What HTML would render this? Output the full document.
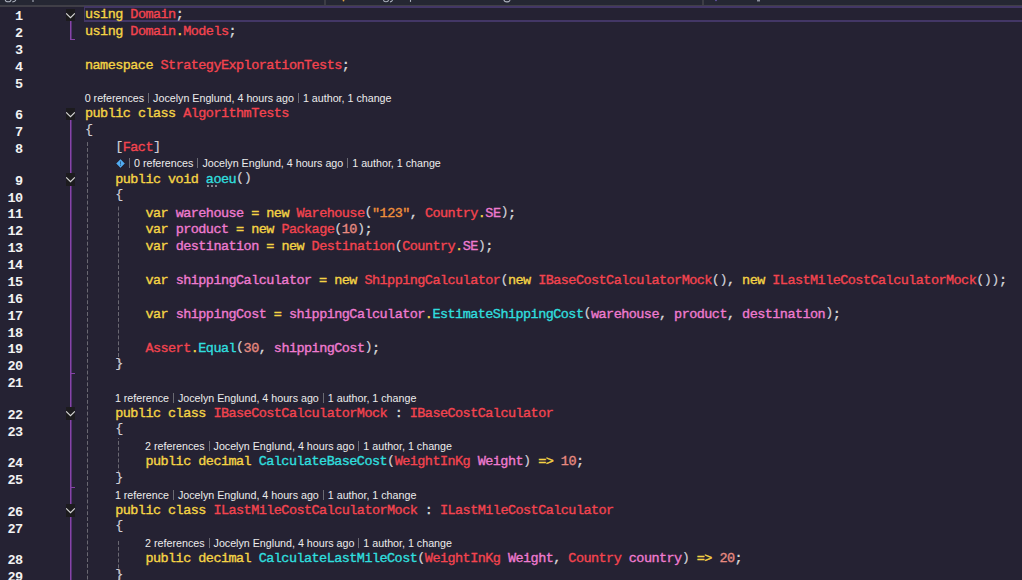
<!DOCTYPE html>
<html><head><meta charset="utf-8"><style>
html,body{margin:0;padding:0;}
body{width:1022px;height:580px;overflow:hidden;background:#252233;position:relative;}
.r{position:absolute;left:0;white-space:pre;}
.code{font-family:"Liberation Mono",monospace;-webkit-text-stroke:0.35px;font-size:13.5px;letter-spacing:-0.5502px;height:16.88px;line-height:16.88px;}
.ln{position:absolute;font-family:"Liberation Mono",monospace;font-weight:bold;font-size:13.5px;letter-spacing:-0.5502px;height:16.88px;line-height:16.88px;color:#f2f2f2;text-align:right;width:22.5px;left:0;white-space:pre;}
.cl{font-family:"Liberation Sans",sans-serif;font-size:10.7px;height:14.72px;line-height:14.72px;color:#ececec;}
.sep{display:inline-block;width:1px;height:10px;background:#6a6a72;margin:0 4px;vertical-align:-1px;}
.k{color:#f5d445}.t{color:#f4444f}.v{color:#ef7bd0}.f{color:#30dede}.p{color:#d8d8d8;}.b{position:relative;top:-1.5px;-webkit-text-stroke:0.15px;color:#d0d0d8}.s{color:#f0903c}.n{color:#e88a80}
.fu{color:#30dede;}
.chev{position:absolute;left:66px;width:9px;height:12.8px;background:#1c1b1e;}
.chev svg{position:absolute;left:0;top:0;}
.ol{position:absolute;background:#8642a6;}
.guide{position:absolute;width:1px;background:repeating-linear-gradient(to bottom,#6a6872 0,#6a6872 3.8px,transparent 3.8px,transparent 5.86px);background-size:1px 5.86px;}
</style></head><body>

<div style="position:absolute;left:0;top:0;width:1022px;height:5px;background:#252733;"></div>
<div style="position:absolute;left:0;top:5px;width:1022px;height:1.5px;background:#403f47;"></div>
<div style="position:absolute;left:324px;top:0;width:2px;height:5px;background:#3c3d45;"></div>
<div style="position:absolute;left:702px;top:0;width:2px;height:5px;background:#3c3d45;"></div>
<svg style="position:absolute;left:0;top:0" width="1022" height="5" viewBox="0 0 1022 5"><g fill="none" stroke="#c4cad6" stroke-width="1.1" opacity="0.85"><path d="M5.3 0 Q5.5 1.8 8.2 1.8 Q10.8 1.8 11 0"/><path d="M15.8 0 Q15.2 1.7 12.4 1.9"/><path d="M33 0 L33 2"/><path d="M383.5 0 Q383.7 1.8 386 1.8 Q388.3 1.8 388.5 0"/><path d="M392.5 0 Q392 1.6 390 1.9"/><path d="M410.5 0 L410.5 1.9"/><path d="M504 0 Q504.2 1.9 507 1.9 Q509.8 1.9 510 0"/><path d="M757 0.8 L760 0.8"/></g><circle cx="343.5" cy="0.6" r="0.9" fill="#e0a040"/><circle cx="716" cy="0.4" r="0.8" fill="#6a58b0"/></svg>
<div style="position:absolute;left:83.6px;top:6.3px;width:940px;height:16px;box-sizing:border-box;border:2px solid #433766;border-left-width:1.5px;border-right:none;"></div>
<div class="guide" style="left:87.0px;top:141.0px;height:439.0px;background-position:0 1.09px;"></div>
<div class="guide" style="left:118.0px;top:206.0px;height:164.0px;background-position:0 0.55px;"></div>
<div class="guide" style="left:118.0px;top:438.0px;height:35.0px;background-position:0 2.95px;"></div>
<div class="guide" style="left:118.0px;top:538.6px;height:41.4px;background-position:0 1.97px;"></div>
<div class="ol" style="left:70px;top:20.8px;width:2px;height:19.2px;background:linear-gradient(to right,#8844a8 50%,#553273 50%);"></div>
<div class="ol" style="left:70.0px;top:38.6px;width:5px;height:1.4px;"></div>
<div class="ol" style="left:70px;top:118.0px;width:2px;height:462.0px;background:linear-gradient(to right,#8844a8 50%,#553273 50%);"></div>
<div class="ol" style="left:70.0px;top:372.5px;width:5px;height:1.4px;"></div>
<div class="ol" style="left:70.0px;top:486.5px;width:5px;height:1.4px;"></div>
<div class="chev" style="top:8.6px;"><svg width="9" height="12" viewBox="0 0 9 12"><path d="M0.2 4.4 L4.5 8.7 L8.8 4.4" fill="none" stroke="#d6d6d6" stroke-width="1.05"/></svg></div>
<div class="chev" style="top:107.7px;"><svg width="9" height="12" viewBox="0 0 9 12"><path d="M0.2 4.4 L4.5 8.7 L8.8 4.4" fill="none" stroke="#d6d6d6" stroke-width="1.05"/></svg></div>
<div class="chev" style="top:173.1px;"><svg width="9" height="12" viewBox="0 0 9 12"><path d="M0.2 4.4 L4.5 8.7 L8.8 4.4" fill="none" stroke="#d6d6d6" stroke-width="1.05"/></svg></div>
<div class="chev" style="top:407.2px;"><svg width="9" height="12" viewBox="0 0 9 12"><path d="M0.2 4.4 L4.5 8.7 L8.8 4.4" fill="none" stroke="#d6d6d6" stroke-width="1.05"/></svg></div>
<div class="chev" style="top:504.2px;"><svg width="9" height="12" viewBox="0 0 9 12"><path d="M0.2 4.4 L4.5 8.7 L8.8 4.4" fill="none" stroke="#d6d6d6" stroke-width="1.05"/></svg></div>
<div class="ln" style="top:9.20px;">1</div>
<div class="r code" style="top:7.30px;left:85.00px;"><span class="k">using</span> <span class="t">Domain</span><span class="p">;</span></div>
<div class="ln" style="top:26.08px;">2</div>
<div class="r code" style="top:24.18px;left:85.00px;"><span class="k">using</span> <span class="t">Domain</span><span class="k">.</span><span class="t">Models</span><span class="p">;</span></div>
<div class="ln" style="top:42.96px;">3</div>
<div class="ln" style="top:59.84px;">4</div>
<div class="r code" style="top:57.94px;left:85.00px;"><span class="k">namespace</span> <span class="t">StrategyExplorationTests</span><span class="p">;</span></div>
<div class="ln" style="top:76.72px;">5</div>
<div class="r cl" style="top:91.10px;left:84.70px;">0 references<span class="sep"></span>Jocelyn Englund, 4 hours ago<span class="sep"></span>1 author, 1 change</div>
<div class="ln" style="top:108.32px;">6</div>
<div class="r code" style="top:106.42px;left:85.00px;"><span class="k">public</span> <span class="k">class</span> <span class="t">AlgorithmTests</span></div>
<div class="ln" style="top:125.20px;">7</div>
<div class="r code" style="top:123.30px;left:85.00px;"><span class="p b">{</span></div>
<div class="ln" style="top:142.08px;">8</div>
<div class="r code" style="top:140.18px;left:115.20px;"><span class="p b">[</span><span class="t">Fact</span><span class="p b">]</span></div>
<div class="r cl" style="top:156.46px;left:114.90px;"><svg width="9" height="9" viewBox="0 0 9 9" style="vertical-align:-1px;margin-right:0px;margin-left:1.1px"><path d="M4.5 0.6 L8.4 4.5 L4.5 8.4 L0.6 4.5Z" fill="#52acf2" stroke="#52acf2" stroke-width="0.6" stroke-linejoin="round"/><rect x="4.05" y="2.4" width="0.9" height="3.1" fill="#2a5a8a"/><rect x="4.05" y="6.1" width="0.9" height="0.9" fill="#2a5a8a"/></svg><span class="sep"></span>0 references<span class="sep"></span>Jocelyn Englund, 4 hours ago<span class="sep"></span>1 author, 1 change</div>
<div class="ln" style="top:173.68px;">9</div>
<div class="r code" style="top:171.78px;left:115.20px;"><span class="k">public</span> <span class="k">void</span> <span class="fu">aoeu</span><span class="p b">(</span><span class="p b">)</span></div>
<div class="ln" style="top:190.56px;">10</div>
<div class="r code" style="top:188.66px;left:115.20px;"><span class="p b">{</span></div>
<div class="ln" style="top:207.44px;">11</div>
<div class="r code" style="top:205.54px;left:145.41px;"><span class="k">var</span> <span class="v">warehouse</span> <span class="k">=</span> <span class="k">new</span> <span class="t">Warehouse</span><span class="p b">(</span><span class="s">&quot;123&quot;</span><span class="p">,</span> <span class="t">Country</span><span class="k">.</span><span class="v">SE</span><span class="p b">)</span><span class="p">;</span></div>
<div class="ln" style="top:224.32px;">12</div>
<div class="r code" style="top:222.42px;left:145.41px;"><span class="k">var</span> <span class="v">product</span> <span class="k">=</span> <span class="k">new</span> <span class="t">Package</span><span class="p b">(</span><span class="n">10</span><span class="p b">)</span><span class="p">;</span></div>
<div class="ln" style="top:241.20px;">13</div>
<div class="r code" style="top:239.30px;left:145.41px;"><span class="k">var</span> <span class="v">destination</span> <span class="k">=</span> <span class="k">new</span> <span class="t">Destination</span><span class="p b">(</span><span class="t">Country</span><span class="k">.</span><span class="v">SE</span><span class="p b">)</span><span class="p">;</span></div>
<div class="ln" style="top:258.08px;">14</div>
<div class="ln" style="top:274.96px;">15</div>
<div class="r code" style="top:273.06px;left:145.41px;"><span class="k">var</span> <span class="v">shippingCalculator</span> <span class="k">=</span> <span class="k">new</span> <span class="t">ShippingCalculator</span><span class="p b">(</span><span class="k">new</span> <span class="t">IBaseCostCalculatorMock</span><span class="p b">(</span><span class="p b">)</span><span class="p">,</span> <span class="k">new</span> <span class="t">ILastMileCostCalculatorMock</span><span class="p b">(</span><span class="p b">)</span><span class="p b">)</span><span class="p">;</span></div>
<div class="ln" style="top:291.84px;">16</div>
<div class="ln" style="top:308.72px;">17</div>
<div class="r code" style="top:306.82px;left:145.41px;"><span class="k">var</span> <span class="v">shippingCost</span> <span class="k">=</span> <span class="v">shippingCalculator</span><span class="k">.</span><span class="f">EstimateShippingCost</span><span class="p b">(</span><span class="v">warehouse</span><span class="p">,</span> <span class="v">product</span><span class="p">,</span> <span class="v">destination</span><span class="p b">)</span><span class="p">;</span></div>
<div class="ln" style="top:325.60px;">18</div>
<div class="ln" style="top:342.48px;">19</div>
<div class="r code" style="top:340.58px;left:145.41px;"><span class="t">Assert</span><span class="k">.</span><span class="f">Equal</span><span class="p b">(</span><span class="n">30</span><span class="p">,</span> <span class="v">shippingCost</span><span class="p b">)</span><span class="p">;</span></div>
<div class="ln" style="top:359.36px;">20</div>
<div class="r code" style="top:357.46px;left:115.20px;"><span class="p b">}</span></div>
<div class="ln" style="top:376.24px;">21</div>
<div class="r cl" style="top:390.62px;left:114.90px;">1 reference<span class="sep"></span>Jocelyn Englund, 4 hours ago<span class="sep"></span>1 author, 1 change</div>
<div class="ln" style="top:407.84px;">22</div>
<div class="r code" style="top:405.94px;left:115.20px;"><span class="k">public</span> <span class="k">class</span> <span class="t">IBaseCostCalculatorMock</span> <span class="p">:</span> <span class="t">IBaseCostCalculator</span></div>
<div class="ln" style="top:424.72px;">23</div>
<div class="r code" style="top:422.82px;left:115.20px;"><span class="p b">{</span></div>
<div class="r cl" style="top:439.10px;left:145.11px;">2 references<span class="sep"></span>Jocelyn Englund, 4 hours ago<span class="sep"></span>1 author, 1 change</div>
<div class="ln" style="top:456.32px;">24</div>
<div class="r code" style="top:454.42px;left:145.41px;"><span class="k">public</span> <span class="k">decimal</span> <span class="f">CalculateBaseCost</span><span class="p b">(</span><span class="t">WeightInKg</span> <span class="v">Weight</span><span class="p b">)</span> <span class="k">=&gt;</span> <span class="n">10</span><span class="p">;</span></div>
<div class="ln" style="top:473.20px;">25</div>
<div class="r code" style="top:471.30px;left:115.20px;"><span class="p b">}</span></div>
<div class="r cl" style="top:487.58px;left:114.90px;">1 reference<span class="sep"></span>Jocelyn Englund, 4 hours ago<span class="sep"></span>1 author, 1 change</div>
<div class="ln" style="top:504.80px;">26</div>
<div class="r code" style="top:502.90px;left:115.20px;"><span class="k">public</span> <span class="k">class</span> <span class="t">ILastMileCostCalculatorMock</span> <span class="p">:</span> <span class="t">ILastMileCostCalculator</span></div>
<div class="ln" style="top:521.68px;">27</div>
<div class="r code" style="top:519.78px;left:115.20px;"><span class="p b">{</span></div>
<div class="r cl" style="top:536.06px;left:145.11px;">2 references<span class="sep"></span>Jocelyn Englund, 4 hours ago<span class="sep"></span>1 author, 1 change</div>
<div class="ln" style="top:553.28px;">28</div>
<div class="r code" style="top:551.38px;left:145.41px;"><span class="k">public</span> <span class="k">decimal</span> <span class="f">CalculateLastMileCost</span><span class="p b">(</span><span class="t">WeightInKg</span> <span class="v">Weight</span><span class="p">,</span> <span class="t">Country</span> <span class="v">country</span><span class="p b">)</span> <span class="k">=&gt;</span> <span class="n">20</span><span class="p">;</span></div>
<div class="ln" style="top:570.16px;">29</div>
<div class="r code" style="top:568.26px;left:115.20px;"><span class="p b">}</span></div>
<div style="position:absolute;left:207.2px;top:185px;width:1.7px;height:1.7px;background:#85838c;"></div>
<div style="position:absolute;left:211.2px;top:185px;width:1.7px;height:1.7px;background:#85838c;"></div>
<div style="position:absolute;left:215.2px;top:185px;width:1.7px;height:1.7px;background:#85838c;"></div>
</body></html>
